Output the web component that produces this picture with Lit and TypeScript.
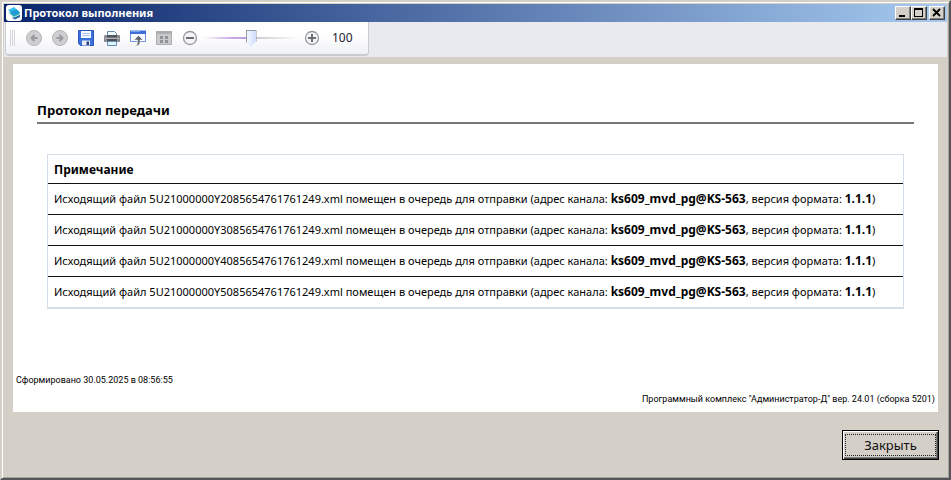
import { LitElement, html, css, svg } from "lit";
import { customElement, property, state } from "lit/decorators.js";

const files = [
  "5U21000000Y2085654761761249.xml",
  "5U21000000Y3085654761761249.xml",
  "5U21000000Y4085654761761249.xml",
  "5U21000000Y5085654761761249.xml",
];

const round = (d: string) => svg`
  <circle cx="9" cy="9" r="7.5" fill="#cfcfd1" stroke="#b6b6b9"/>
  <path d=${d} fill="none" stroke="#98999c" stroke-width="2"/>`;

const icons = {
  back: round("M12.500 9H7M9.500 6L6.500 9L9.500 12"),
  forward: round("M5.500 9H11M8.500 6L11.500 9L8.500 12"),
  save: svg`
    <path d="M1.500 1.500H16.500V16.500H3.500L1.500 14.500Z" fill="#3c70dc" stroke="#2b57bb"/>
    <path d="M4 2H14V9H4Z" fill="#f4f8ff"/>
    <path d="M5.500 4.500H12.500M5.500 6.500H12.500" stroke="#a9c2ef"/>
    <path d="M5 11.500H13V16.500H5Z" fill="#e9edf6"/>
    <path d="M9.500 12.500H12V16H9.500Z" fill="#234383"/>`,
  print: svg`
    <path d="M4.500 7V2.500H11.500L13.500 4.500V7Z" fill="#eef8ff" stroke="#6c8ba6"/>
    <path d="M1 7Q1 6 2 6H16Q17 6 17 7V13H1Z" fill="#8b8d92"/>
    <path d="M4 6H14V8.500H4Z" fill="#55585e"/>
    <path d="M2 9.500H16" stroke="#b5b7bb"/>
    <path d="M4 10H14V13H4Z" fill="#4d5057"/>
    <path d="M4.500 12.500H13.500V16.500H4.500Z" fill="#dff2fd" stroke="#5d8fb6"/>`,
  export: svg`
    <path d="M1.500 12.500V2.500H16.500V12.500Z" fill="#f7faff" stroke="#7396e0"/>
    <path d="M1 1.500H17V5H1Z" fill="#3f70da"/>
    <path d="M2 2.500H11" stroke="#7fa2ec"/>
    <path d="M9.500 6.500L14 11H11V14Q10.500 17 6 17Q8.500 16 8.500 14V11H5Z" fill="#63676d" stroke="#fff" stroke-width=".5"/>`,
  layout: svg`
    <path d="M1.500 2.500H16.500V15.500H1.500Z" fill="#c9cacc" stroke="#aeb0b2"/>
    <path d="M1 2H17V5H1Z" fill="#acadaf"/>
    <path d="M5 7H8V10H5ZM10 7H13V10H10ZM5 11H8V14H5ZM10 11H13V14H10Z" fill="#909295"/>`,
  minus: svg`
    <circle cx="9" cy="9" r="6.500" fill="#f5f5f7" stroke="#96999f" stroke-width="1.300"/>
    <path d="M5 9H13" stroke="#6b6e75" stroke-width="2"/>`,
  plus: svg`
    <circle cx="9" cy="9" r="6.500" fill="#f5f5f7" stroke="#96999f" stroke-width="1.300"/>
    <path d="M5 9H13M9 5V13" stroke="#6b6e75" stroke-width="2"/>`,
};

@customElement("title-bar")
class TitleBar extends LitElement {
  @property() heading = "";

  static styles = css`
    :host {
      display: flex;
      align-items: center;
      height: 18px;
      padding: 0 2px;
      background: linear-gradient(90deg, #0a246a, #a6caf0);
      color: #fff;
    }
    .logo { width: 16px; height: 16px; flex: none; }
    .heading {
      flex: 1;
      margin: 0 0 0 2px;
      font: bold 11px/18px "Noto Sans", "Open Sans", sans-serif;
      white-space: nowrap;
    }
    .key {
      box-sizing: border-box;
      width: 16px;
      height: 14px;
      padding: 0;
      border: 1px solid;
      border-color: #fff #404040 #404040 #fff;
      background: #d4d0c8;
      box-shadow: inset -1px -1px #808080;
    }
    .key svg { display: block; width: 14px; height: 12px; }
    .close { margin-left: 2px; }
  `;

  render() {
    return html`
      <svg class="logo" viewBox="0 0 16 16" aria-hidden="true">
        <rect width="16" height="16" rx="3" fill="#fff"/>
        <path d="M6 13L9 14.500L14 12V9.500Z" fill="#2b68a8"/>
        <path d="M2.500 7.500L8 13L14 10L13 7Z" fill="#25a3a9"/>
        <path d="M2 5L8 2L14 7.500L8 10.500Z" fill="#35bfea"/>
        <path d="M4 6.800L10.500 4.200L14 7.500L8 10.500Z" fill="#1f9bd6"/>
        <path d="M2.500 7.500L8 12L14 9.300" fill="none" stroke="#d5f1f6" stroke-width=".800"/>
      </svg>
      <h1 class="heading">${this.heading}</h1>
      <button class="key" aria-label="Свернуть"><svg viewBox="0 0 14 12"><path d="M3 8H9V10H3Z"/></svg></button>
      <button class="key" aria-label="Развернуть"><svg viewBox="0 0 14 12"><path d="M2 1H11V10H2ZM3 3V9H10V3Z" fill-rule="evenodd"/></svg></button>
      <button class="key close" aria-label="Закрыть окно"><svg viewBox="0 0 14 12"><path d="M3 2L10 9M10 2L3 9" stroke="#000" stroke-width="1.800"/></svg></button>
    `;
  }
}

@customElement("report-toolbar")
class ReportToolbar extends LitElement {
  @state() private zoom = 100;

  static styles = css`
    :host { display: flex; padding: 0 0 1px 1px; background: #e9eaef; }
    .tools {
      display: flex;
      align-items: center;
      box-sizing: border-box;
      width: 364px;
      height: 34px;
      padding: 0 4px;
      border: 1px solid #c9cbd2;
      border-width: 0 1px 2px;
      border-radius: 0 0 4px 4px;
      background: linear-gradient(#fdfdfe, #fff 40%, #f0f1f6);
    }
    .grip {
      width: 6px;
      height: 16px;
      margin-right: 5px;
      background: repeating-linear-gradient(90deg, #d3d5da 0 1px, transparent 1px 2px);
    }
    .tool {
      flex: none;
      width: 26px;
      height: 26px;
      padding: 4px;
      border: 0;
      background: none;
    }
    .tool svg { display: block; width: 18px; height: 18px; }
    .zoom {
      appearance: none;
      width: 96px;
      height: 20px;
      margin: 0;
      background: linear-gradient(90deg, transparent, #c9a9e6 30%, #b99bdc 50%, #c8c8cf 52%, transparent) center / 100% 2px no-repeat;
    }
    .zoom::-webkit-slider-thumb {
      appearance: none;
      width: 11px;
      height: 17px;
      border: 1px solid #9699a5;
      background: linear-gradient(90deg, #f3f7ff, #cfdefb);
      clip-path: polygon(0 0, 100% 0, 100% 70%, 50% 100%, 0 70%);
    }
    .value {
      margin-left: 7px;
      font: 12px/18px "Noto Sans", "Open Sans", sans-serif;
      color: #222234;
    }
  `;

  private tool(icon: unknown, label: string, disabled = false) {
    return html`<button class="tool" aria-label=${label} ?disabled=${disabled}><svg viewBox="0 0 18 18">${icon}</svg></button>`;
  }

  render() {
    return html`
      <div class="tools" role="toolbar">
        <span class="grip"></span>
        ${this.tool(icons.back, "Назад", true)}
        ${this.tool(icons.forward, "Вперёд", true)}
        ${this.tool(icons.save, "Сохранить")}
        ${this.tool(icons.print, "Печать")}
        ${this.tool(icons.export, "Экспорт")}
        ${this.tool(icons.layout, "Вид", true)}
        ${this.tool(icons.minus, "Уменьшить")}
        <input class="zoom" type="range" min="0" max="200" aria-label="Масштаб"
          .value=${String(this.zoom)}
          @input=${(e: Event) => (this.zoom = Number((e.target as HTMLInputElement).value))}>
        ${this.tool(icons.plus, "Увеличить")}
        <span class="value">${this.zoom}</span>
      </div>
    `;
  }
}

@customElement("report-page")
class ReportPage extends LitElement {
  static styles = css`
    :host {
      display: flex;
      flex-direction: column;
      background: #fff;
      color: #000;
      font: 11px/18px "Noto Sans", "Open Sans", sans-serif;
    }
    .title {
      margin: 36px 24px 30px;
      padding-bottom: 2px;
      border-bottom: 2px solid #777;
      font-size: 13px;
      line-height: 20px;
    }
    .log {
      margin: 0 34px;
      border: 2px solid #d5dfea;
      border-width: 1px 1px 2px;
      border-spacing: 0;
    }
    .log th, .log td { padding: 6px; text-align: left; }
    .log th { padding-bottom: 4px; font-size: 12px; }
    .log td { border-top: 1px solid #111; }
    .log b { font-size: 12px; }
    .foot {
      display: flex;
      flex-direction: column;
      margin-top: auto;
      padding: 0 3px 6px;
      font: 9px/14px Roboto, "Noto Sans", sans-serif;
      gap: 5px;
    }
    .product { align-self: flex-end; }
  `;

  render() {
    return html`
      <h2 class="title">Протокол передачи</h2>
      <table class="log">
        <thead><tr><th scope="col">Примечание</th></tr></thead>
        <tbody>
          ${files.map((f) => html`<tr><td>Исходящий файл ${f} помещен в очередь для отправки (адрес канала: <b>ks609_mvd_pg@KS-563</b>, версия формата: <b>1.1.1</b>)</td></tr>`)}
        </tbody>
      </table>
      <footer class="foot">
        <span>Сформировано 30.05.2025 в 08:56:55</span>
        <span class="product">Программный комплекс "Администратор-Д" вер. 24.01 (сборка 5201)</span>
      </footer>
    `;
  }
}

@customElement("app-root")
class AppRoot extends LitElement {
  static styles = css`
    :host {
      display: flex;
      flex-direction: column;
      box-sizing: border-box;
      min-height: 100vh;
      padding: 2px;
      border: 2px solid;
      border-color: #d4d0c8 #55555a #55555a #d4d0c8;
      background: #d4d0c8;
      box-shadow: inset 1px 1px #fff, inset -1px -1px #a5a29c;
    }
    .page { flex: 1; margin: 7px 9px 0; }
    .actions { display: flex; justify-content: flex-end; padding: 18px 8px 16px; }
    .dismiss {
      box-sizing: border-box;
      width: 97px;
      height: 30px;
      padding: 2px;
      border: 1px solid #000;
      background: #d4d0c8;
      box-shadow: inset 1px 1px #fff, inset -1px -1px #404040, inset -2px -2px #808080;
      color: #111;
      font: 13px/20px "Noto Sans", "Open Sans", sans-serif;
    }
    .focus { display: block; border: 1px dotted #222; }
  `;

  render() {
    return html`
      <title-bar heading="Протокол выполнения"></title-bar>
      <report-toolbar></report-toolbar>
      <report-page class="page"></report-page>
      <div class="actions">
        <button class="dismiss"><span class="focus">Закрыть</span></button>
      </div>
    `;
  }
}
